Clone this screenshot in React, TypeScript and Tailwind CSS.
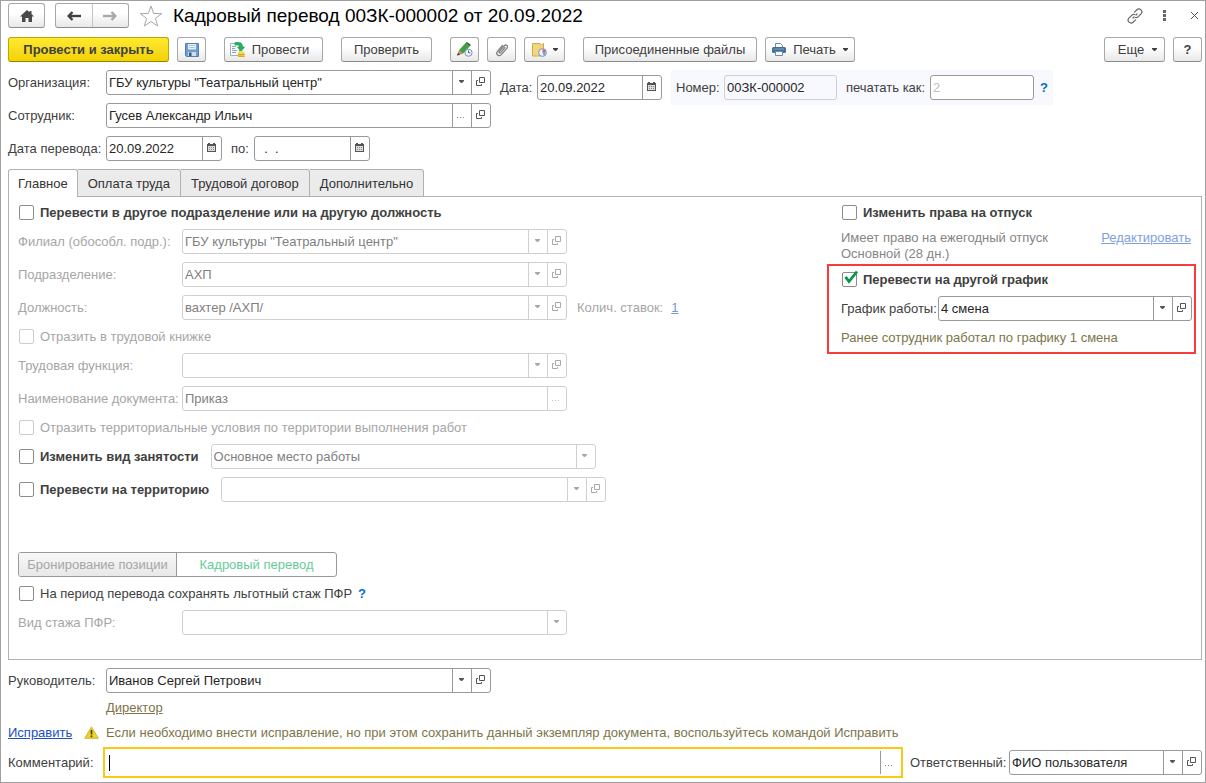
import React, { useId } from "react";
import clsx from "clsx";

type Tail = "drop" | "open" | "dots" | "calendar";

const DropIcon = () => (
  <svg width="5" height="3" viewBox="0 0 5 3" fill="currentColor">
    <path d="M0 0h5v1L3 3H2L0 1z" />
  </svg>
);

const OpenIcon = () => (
  <svg width="9" height="9" viewBox="0 0 9 9" fill="none" stroke="currentColor">
    <path d="M3.5.5h5v5h-5z" />
    <path d="M2 3.5H.5v5h5V7" />
  </svg>
);

const CalendarIcon = () => (
  <svg width="9" height="9" viewBox="0 0 9 9" fill="currentColor">
    <path d="M1 0h2v1h3V0h2v1h1v8H0V1h1z" />
    <path d="M1 3h7v5H1z" fill="#dcdcdc" />
    <path d="M2 4h1v1H2zM4 4h1v1H4zM6 4h1v1H6zM2 6h1v1H2zM4 6h1v1H4zM6 6h1v1H6z" opacity=".6" />
  </svg>
);

const DotsIcon = () => (
  <svg width="8" height="2" viewBox="0 0 8 2" fill="currentColor" className="mt-1.5 opacity-70">
    <path d="M0 0h1v1H0zM3 0h1v1H3zM6 0h1v1H6z" />
  </svg>
);

const tailIcons: Record<Tail, React.ReactNode> = {
  drop: <DropIcon />,
  open: <OpenIcon />,
  dots: <DotsIcon />,
  calendar: <CalendarIcon />,
};

const tailNames: Record<Tail, string> = {
  drop: "Выбрать из списка",
  open: "Открыть",
  dots: "Выбрать",
  calendar: "Календарь",
};

function Field({
  id,
  label,
  value = "",
  tails = [],
  disabled,
  className,
}: {
  id?: string;
  label?: string;
  value?: string;
  tails?: Tail[];
  disabled?: boolean;
  className?: string;
}) {
  return (
    <div
      className={clsx(
        "flex h-[25px] rounded-[3px] border bg-white",
        disabled ? "border-[#d0d0d0] text-[#7f7f7f]" : "border-[#999999] text-[#262626]",
        className,
      )}
    >
      <input
        id={id}
        aria-label={label}
        defaultValue={value}
        disabled={disabled}
        className="w-full min-w-0 flex-1 bg-transparent px-0.5 outline-none"
      />
      {tails.map((t) => (
        <button
          key={t}
          type="button"
          aria-label={tailNames[t]}
          disabled={disabled}
          className={clsx(
            "flex w-[19px] shrink-0 items-center justify-center border-l pr-0.5 pb-0.5",
            disabled ? "border-[#d0d0d0] text-[#a8a8a8]" : "border-[#999999] text-[#555555]",
          )}
        >
          {tailIcons[t]}
        </button>
      ))}
    </div>
  );
}

function Row({
  label,
  labelClass,
  disabled,
  children,
  ...field
}: {
  label: string;
  labelClass: string;
  disabled?: boolean;
  value?: string;
  tails?: Tail[];
  className?: string;
  children?: React.ReactNode;
}) {
  const id = useId();
  return (
    <div className="flex items-center">
      <label htmlFor={id} className={clsx("shrink-0 whitespace-nowrap", labelClass, disabled && "text-[#a6a6a6]")}>
        {label}
      </label>
      <Field id={id} disabled={disabled} {...field} />
      {children}
    </div>
  );
}

function Check({
  label,
  bold,
  disabled,
  checked,
}: {
  label: string;
  bold?: boolean;
  disabled?: boolean;
  checked?: boolean;
}) {
  return (
    <label
      className={clsx(
        "flex h-[17px] items-center gap-1.5 pl-px whitespace-nowrap",
        bold && "font-bold",
        disabled && "text-[#a6a6a6]",
      )}
    >
      <span className="relative flex">
        <input
          type="checkbox"
          defaultChecked={checked}
          disabled={disabled}
          className={clsx(
            "peer size-[15px] appearance-none rounded-[2px] border bg-white",
            disabled ? "border-[#cccccc]" : "border-[#8c8c8c]",
          )}
        />
        <svg
          className="pointer-events-none absolute -top-0.5 left-0 hidden peer-checked:block"
          width="17"
          height="15"
          viewBox="0 0 17 15"
          fill="none"
          stroke="#00984a"
          strokeWidth="2.8"
        >
          <path d="M3.500 6.800 7 11.500 15 1.500" />
        </svg>
      </span>
      {label}
    </label>
  );
}

function ToolButton({
  children,
  className,
  label,
}: {
  children: React.ReactNode;
  className?: string;
  label?: string;
}) {
  return (
    <button
      type="button"
      aria-label={label}
      className={clsx(
        "flex h-[25px] shrink-0 items-center justify-center rounded-[3px] border border-[#a8a8a8] border-b-[#8c8c8c] bg-linear-to-b from-white from-40% to-[#e8e8e8] whitespace-nowrap",
        className,
      )}
    >
      {children}
    </button>
  );
}

const HomeIcon = () => (
  <svg width="14" height="12" viewBox="0 0 14 12" fill="#4a4a4a">
    <path d="M7 0 0 6.500h2V12h3.500V8h3v4H12V6.500h2L11.500 4V1h-2v1.300z" />
  </svg>
);

const ArrowIcon = ({ flip }: { flip?: boolean }) => (
  <svg width="14" height="10" viewBox="0 0 14 10" fill="none" stroke="currentColor" strokeWidth="2.400" className={flip ? "rotate-180" : ""}>
    <path d="M14 5H2" />
    <path d="M5.500 1 1.700 5l3.800 4" />
  </svg>
);

const StarIcon = () => (
  <svg width="24" height="22" viewBox="0 0 24 22" fill="white" stroke="#a8a8a8">
    <path d="M12 1l2.700 7.500 8 .1-6.300 4.900 2.300 7.500-6.700-4.500L5.300 21l2.300-7.500L1.300 8.600l8-.1z" />
  </svg>
);

const SaveIcon = () => (
  <svg width="14" height="14" viewBox="0 0 14 14">
    <path d="M.5.5h13v13h-12l-1-1z" fill="#6f9dcd" stroke="#527fae" />
    <path d="M3 1h8v5.500H3z" fill="#e9eff6" />
    <path d="M4 2.500h6M4 4.500h6" stroke="#b4c6da" />
    <path d="M3 9h8v4H3z" fill="#cfdceb" />
    <path d="M4 9.500h2.500V13H4z" fill="#2f5c8e" />
  </svg>
);

const PostIcon = () => (
  <svg width="15" height="16" viewBox="0 0 15 16">
    <path d="M.5 1.500h9v12h-9z" fill="#f6f8fa" stroke="#9fb0be" />
    <path d="M2 4.500h4M2 6.500h3M2 8.500h5M2 10.500h4" stroke="#8ea3b5" />
    <path d="M5 .5h3.500c3 0 4 1.500 4 4.500h2L11 9.500 7.500 5h2c0-1.500-.5-2-2-2H5z" fill="#21b45e" stroke="#129648" strokeWidth=".6" />
    <path d="M8 10.500h6.500V15H8z" fill="#f0c330" />
    <path d="M8 12.500h6.500M8 14.500h6.500" stroke="#d9a92a" />
    <ellipse cx="11.250" cy="10.500" rx="3.250" ry="1.200" fill="#f9dc63" />
  </svg>
);

const PencilIcon = () => (
  <svg width="16" height="15" viewBox="0 0 16 15">
    <path d="M8.500 1 12.800 4.200 6 11.800 1.800 8.500z" fill="#43a047" />
    <path d="M8.500 1 9.800 0 13.900 2.800 12.800 4.200z" fill="#3f5a44" />
    <path d="M1.800 8.500 6 11.800 0 13.500z" fill="#c98d5c" />
    <path d="M1 11 3 12.700 0 13.500z" fill="#333" />
    <circle cx="11.500" cy="10.700" r="3.600" fill="#edf4fa" stroke="#7d97ac" />
    <path d="M11.500 8.500v2.300h1.800" fill="none" stroke="#4f6a80" />
  </svg>
);

const ClipIcon = () => (
  <svg width="14" height="14" viewBox="0 0 14 14" fill="none" stroke="#808080" strokeWidth="1.300" strokeLinecap="round">
    <path d="M10 4.500 5.600 9.600c-.9.900-2.200-.3-1.300-1.200l5-5.700c1.700-1.700 4.300.4 2.700 2.400l-5.700 6.500c-2.500 2.500-6-.6-3.800-3.300L7.400 2.500" />
  </svg>
);

const NoteIcon = () => (
  <svg width="15" height="14" viewBox="0 0 15 14">
    <path d="M.5.500h7.500a1.500 1.500 0 0 0 3 0h.5v12.500H.5z" fill="#f3d67c" stroke="#cfa94a" />
    <circle cx="10.500" cy="9.500" r="3.900" fill="#eef3fb" stroke="#6f8fc0" />
    <path d="M10.500 9.500V6.300a3.200 3.200 0 0 1 3.200 3.200z" fill="#df5b57" />
    <path d="M10.500 9.500h3.200a3.200 3.200 0 0 1-2 2.900z" fill="#7398d2" />
  </svg>
);

const PrinterIcon = () => (
  <svg width="14" height="13" viewBox="0 0 14 13">
    <path d="M3.500 4V.5h5l2 2V4" fill="#fff" stroke="#6f8ca6" />
    <rect y="4" width="14" height="6" rx="1.500" fill="#41719b" />
    <path d="M2 6h10" stroke="#7fa3c4" />
    <path d="M3.500 8.500h7v4h-7z" fill="#fff" stroke="#6f8ca6" />
  </svg>
);

const LinkIcon = () => (
  <svg width="16" height="16" viewBox="0 0 16 16" fill="none" stroke="#666" strokeWidth="1.200" strokeLinecap="round">
    <path d="M7.500 4.200 9.900 1.800c2.700-2.500 6.700 1.200 4.200 4L11 8.900c-.8.800-1.800.9-2.600.6" />
    <path d="M8.500 11.800 6.100 14.200c-2.700 2.500-6.700-1.200-4.200-4L5 7.100c.8-.8 1.800-.9 2.600-.6" />
    <path d="M6 10l1-1M9 7l1-1" />
  </svg>
);

const WarningIcon = () => (
  <svg width="15" height="13" viewBox="0 0 15 13">
    <path d="M7.500.8 14.300 12.300H.7z" fill="#ecd22f" stroke="#d3b92c" strokeLinejoin="round" />
    <path d="M7.500 4v4.500M7.500 9.500v1.700" stroke="#3d3a20" strokeWidth="1.600" />
  </svg>
);

const tabs = ["Главное", "Оплата труда", "Трудовой договор", "Дополнительно"];

function Header() {
  return (
    <header className="flex items-center">
      <ToolButton className="w-[37px]" label="Начальная страница">
        <HomeIcon />
      </ToolButton>
      <div className="ml-2.5 flex h-[25px] w-[74px] rounded-[3px] border border-[#a8a8a8] border-b-[#8c8c8c] bg-linear-to-b from-white from-40% to-[#e8e8e8]">
        <button type="button" aria-label="Назад" className="flex flex-1 items-center justify-center text-[#404040]">
          <ArrowIcon />
        </button>
        <button type="button" aria-label="Вперед" className="flex flex-1 items-center justify-center border-l border-[#c4c4c4] text-[#a8a8a8]">
          <ArrowIcon flip />
        </button>
      </div>
      <button type="button" aria-label="Избранное" className="ml-2.5">
        <StarIcon />
      </button>
      <h1 className="ml-2.5 text-[19px] leading-6 whitespace-nowrap text-black">
        Кадровый перевод 00ЗК-000002 от 20.09.2022
      </h1>
      <div className="mr-1 ml-auto flex items-center">
        <button type="button" aria-label="Ссылка">
          <LinkIcon />
        </button>
        <button type="button" aria-label="Меню" className="ml-5">
          <svg width="4" height="11" viewBox="0 0 4 11" fill="#666">
            <path d="M0 0h3v3H0zM0 4h3v3H0zM0 8h3v3H0z" />
          </svg>
        </button>
        <button type="button" aria-label="Закрыть" className="ml-6">
          <svg width="7" height="7" viewBox="0 0 7 7" stroke="#555">
            <path d="M0 0l7 7M7 0 0 7" />
          </svg>
        </button>
      </div>
    </header>
  );
}

function Toolbar() {
  return (
    <div className="mt-[9px] flex items-center gap-2">
      <button
        type="button"
        className="h-[25px] w-[161px] rounded-[3px] border border-[#c0a400] border-b-[#978100] bg-linear-to-b from-[#ffe92e] to-[#f2d200] font-bold whitespace-nowrap"
      >
        Провести и закрыть
      </button>
      <ToolButton className="w-[29px]" label="Записать">
        <SaveIcon />
      </ToolButton>
      <ToolButton className="ml-2.5 w-[99px] gap-[7px] pr-2">
        <PostIcon />
        Провести
      </ToolButton>
      <ToolButton className="ml-2.5 w-[91px]">Проверить</ToolButton>
      <ToolButton className="ml-2.5 w-[29px]" label="Изменить">
        <PencilIcon />
      </ToolButton>
      <ToolButton className="w-[29px]" label="Вложения">
        <ClipIcon />
      </ToolButton>
      <ToolButton className="w-[41px] gap-1.5" label="Напоминания">
        <NoteIcon />
        <DropIcon />
      </ToolButton>
      <ToolButton className="ml-2.5 w-[174px]">Присоединенные файлы</ToolButton>
      <ToolButton className="w-[90px] gap-[7px]">
        <PrinterIcon />
        Печать
        <DropIcon />
      </ToolButton>
      <ToolButton className="ml-auto w-[61px] gap-2 pl-1.5">
        Еще
        <DropIcon />
      </ToolButton>
      <ToolButton className="w-[29px] font-bold">?</ToolButton>
    </div>
  );
}

function DocumentFields() {
  const ids = { to: useId(), date: useId(), number: useId(), print: useId() };
  return (
    <section className="mt-2 flex items-start gap-[9px]">
      <div className="flex flex-col gap-2">
        <Row label="Организация:" labelClass="w-[98px]" className="w-[385px]" value={'ГБУ культуры "Театральный центр"'} tails={["drop", "open"]} />
        <Row label="Сотрудник:" labelClass="w-[98px]" className="w-[385px]" value="Гусев Александр Ильич" tails={["dots", "open"]} />
        <Row label="Дата перевода:" labelClass="w-[98px]" className="w-[116px]" value="20.09.2022" tails={["calendar"]}>
          <label htmlFor={ids.to} className="ml-[9px] w-[23px]">
            по:
          </label>
          <Field id={ids.to} className="w-[116px]" value="  .  ." tails={["calendar"]} />
        </Row>
      </div>
      <div className="flex items-center">
        <label htmlFor={ids.date} className="w-[37px]">
          Дата:
        </label>
        <Field id={ids.date} className="w-[125px]" value="20.09.2022" tails={["calendar"]} />
        <div className="ml-[9px] flex h-[35px] items-center bg-[#f8f8ff] px-[5px]">
          <label htmlFor={ids.number} className="w-12">
            Номер:
          </label>
          <input
            id={ids.number}
            readOnly
            defaultValue="00ЗК-000002"
            className="h-[25px] w-[113px] rounded-[3px] border border-[#d0d0d0] bg-transparent px-0.5 text-[#262626]"
          />
          <label htmlFor={ids.print} className="ml-[9px] w-[84px] whitespace-nowrap">
            печатать как:
          </label>
          <input
            id={ids.print}
            placeholder="2"
            className="h-[25px] w-[104px] rounded-[3px] border border-[#999999] bg-white px-0.5 placeholder:text-[#c0c0c0]"
          />
          <button type="button" aria-label="Справка" className="ml-1.5 font-bold text-[#0072c6]">
            ?
          </button>
        </div>
      </div>
    </section>
  );
}

function MainTab() {
  return (
    <div className="flex items-start justify-between border-x border-b border-[#b0b0b0] pt-[7px] pr-[5px] pb-6 pl-[9px]">
      <div className="flex flex-col gap-2">
        <Check bold label="Перевести в другое подразделение или на другую должность" />
        <Row disabled label="Филиал (обособл. подр.):" labelClass="w-[164px]" className="w-[385px]" value={'ГБУ культуры "Театральный центр"'} tails={["drop", "open"]} />
        <Row disabled label="Подразделение:" labelClass="w-[164px]" className="w-[385px]" value="АХП" tails={["drop", "open"]} />
        <Row disabled label="Должность:" labelClass="w-[164px]" className="w-[385px]" value="вахтер /АХП/" tails={["drop", "open"]}>
          <span className="ml-2.5 text-[#a6a6a6]">Колич. ставок:</span>
          <a href="#rates" className="ml-2 text-[#6f9bdc] underline">
            1
          </a>
        </Row>
        <Check disabled label="Отразить в трудовой книжке" />
        <Row disabled label="Трудовая функция:" labelClass="w-[164px]" className="w-[385px]" tails={["drop", "open"]} />
        <Row disabled label="Наименование документа:" labelClass="w-[164px]" className="w-[385px]" value="Приказ" tails={["dots"]} />
        <Check disabled label="Отразить территориальные условия по территории выполнения работ" />
        <div className="flex items-center gap-3">
          <Check bold label="Изменить вид занятости" />
          <Field disabled label="Вид занятости" className="w-[385px]" value="Основное место работы" tails={["drop"]} />
        </div>
        <div className="flex items-center gap-3">
          <Check bold label="Перевести на территорию" />
          <Field disabled label="Территория" className="w-[385px]" tails={["drop", "open"]} />
        </div>
        <div className="mt-[42px] flex h-[25px] w-[319px] overflow-hidden rounded-[3px] border border-[#999999]">
          <button type="button" disabled className="w-[157px] bg-linear-to-b from-[#f8f8f8] to-[#e8e8e8] text-[#a6a6a6]">
            Бронирование позиции
          </button>
          <button type="button" className="flex-1 border-l border-[#999999] text-[#66cc99]">
            Кадровый перевод
          </button>
        </div>
        <div className="flex items-center gap-1.5">
          <Check label="На период перевода сохранять льготный стаж ПФР" />
          <button type="button" aria-label="Справка" className="h-[17px] font-bold text-[#0072c6]">
            ?
          </button>
        </div>
        <Row disabled label="Вид стажа ПФР:" labelClass="w-[164px]" className="w-[385px]" tails={["drop"]} />
      </div>

      <div className="flex w-[369px] flex-col">
        <div className="flex flex-col gap-2 pr-[5px] pl-3.5">
          <Check bold label="Изменить права на отпуск" />
          <div className="flex items-start justify-between pt-px leading-4 text-[#858585]">
            <p>
              Имеет право на ежегодный отпуск
              <br />
              Основной (28 дн.)
            </p>
            <a href="#edit" className="text-[#7f9fdf] underline">
              Редактировать
            </a>
          </div>
        </div>
        <div className="mt-0.5 flex flex-col gap-2 border-2 border-[#f83c3c] pt-[5px] pr-0.5 pb-1.5 pl-3">
          <Check bold checked label="Перевести на другой график" />
          <Row label="График работы:" labelClass="w-[97px]" className="flex-1" value="4 смена" tails={["drop", "open"]} />
          <p className="text-[#7d7549]">Ранее сотрудник работал по графику 1 смена</p>
        </div>
      </div>
    </div>
  );
}

function Footer() {
  const ids = { comment: useId(), owner: useId() };
  return (
    <footer className="mt-2 flex flex-col">
      <Row label="Руководитель:" labelClass="w-[98px]" className="w-[385px]" value="Иванов Сергей Петрович" tails={["drop", "open"]} />
      <a href="#position" className="mt-1.5 ml-[98px] self-start leading-[17px] text-[#7d7549] underline">
        Директор
      </a>
      <div className="mt-2 flex items-center leading-[17px]">
        <a href="#fix" className="w-[76px] text-[#1a50c0] underline">
          Исправить
        </a>
        <WarningIcon />
        <p className="ml-[7px] text-[#7d7549]">
          Если необходимо внести исправление, но при этом сохранить данный экземпляр документа, воспользуйтесь командой Исправить
        </p>
      </div>
      <div className="mt-1.5 flex items-center">
        <label htmlFor={ids.comment} className="w-[95px]">
          Комментарий:
        </label>
        <div className="flex h-[31px] flex-1 items-center border-2 border-[#fbc914] bg-white pl-1">
          <span className="h-4 w-px bg-black" />
          <input id={ids.comment} className="h-full w-full min-w-0 flex-1 px-0.5 outline-none" />
          <button type="button" aria-label="Выбрать" className="flex h-[23px] w-[21px] items-center justify-center border-l border-[#999999] pr-1 text-[#4d4d4d]">
            <DotsIcon />
          </button>
        </div>
        <label htmlFor={ids.owner} className="ml-[7px] w-[99px]">
          Ответственный:
        </label>
        <Field id={ids.owner} className="w-[193px]" value="ФИО пользователя" tails={["drop", "open"]} />
      </div>
    </footer>
  );
}

export default function App() {
  return (
    <main className="min-h-screen border border-[#a0a0a0] bg-white pt-0.5 pr-[3px] pb-[3px] pl-[7px] font-['Liberation_Sans',Arial,sans-serif] text-[13px] leading-[17px] text-[#404040]">
      <Header />
      <Toolbar />
      <DocumentFields />
      <nav className="mt-2 flex text-[#333333]">
        {tabs.map((t, i) => (
          <button
            key={t}
            type="button"
            className={clsx(
              "h-7 border-t border-r border-[#b0b0b0] whitespace-nowrap",
              i === 0 ? "rounded-t-[3px] border-l bg-white px-[9px]" : "rounded-tr-[3px] border-b bg-[#ebebeb] px-2.5",
            )}
          >
            {t}
          </button>
        ))}
        <div className="flex-1 border-b border-[#b0b0b0]" />
      </nav>
      <MainTab />
      <Footer />
    </main>
  );
}
